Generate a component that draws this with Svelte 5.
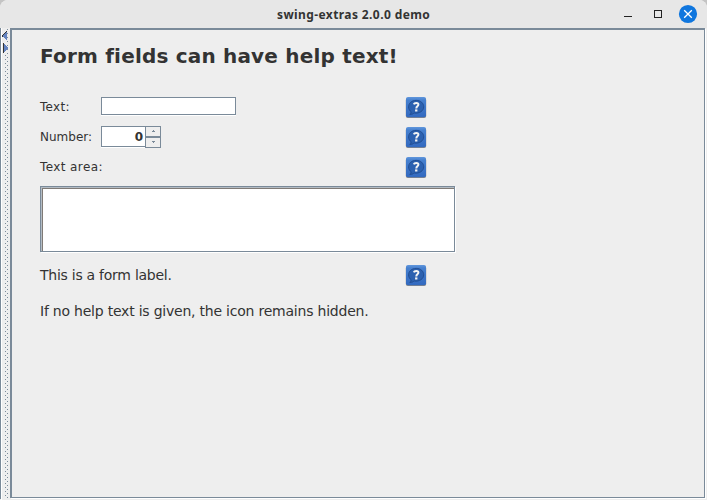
<script>
  const dots = Array.from({ length: 235 }, (_, i) => i);
</script>

{#snippet help()}
  <svg class="help" width="22" height="22" viewBox="0 0 22 22">
    <defs>
      <linearGradient id="tile" x1="0" y1="0" x2="0" y2="1">
        <stop offset="0" stop-color="#6197dc" />
        <stop offset="0.15" stop-color="#4680cf" />
        <stop offset="1" stop-color="#3269bf" />
      </linearGradient>
    </defs>
    <rect x="0.8" y="1" width="20.4" height="20" rx="2" fill="#444" opacity=".6" />
    <rect x="1" y="0" width="20" height="20.2" rx="2" fill="url(#tile)" />
    <path d="M11.2 3.4C6.6 3.4 3.6 6.2 3.6 9.8C3.6 12.2 4.7 13.8 6.2 14.8C6.2 16.1 5.5 17 4.8 17.4C6.9 17.4 8.3 16.8 9.2 16C14.5 16.8 18.7 13.8 18.7 9.8C18.7 6.2 15.7 3.4 11.2 3.4Z" fill="#2c61b0" stroke="#214d92" stroke-width="1" />
    <path d="M8.8 7.4C9.4 5.5 13.4 5.4 13.4 7.6C13.4 9.4 11.3 9.2 11.3 11.4" fill="none" stroke="#f4f4f4" stroke-width="2" />
    <rect x="10.1" y="12.4" width="2.3" height="2.1" fill="#f4f4f4" />
  </svg>
{/snippet}

<div class="window">
  <header>
    <span class="title">swing-extras 2.0.0 demo</span>
    <svg class="controls" width="84" height="28" viewBox="0 0 84 28">
      <path d="M4 16.5h8" stroke="#222" />
      <rect x="34.5" y="10.5" width="7" height="7" fill="none" stroke="#222" />
      <circle cx="68" cy="14" r="9.1" fill="#0f76de" />
      <path d="M64.2 10.2l7.6 7.6M71.8 10.2l-7.6 7.6" stroke="#fff" stroke-width="1.3" />
    </svg>
  </header>
  <div class="body">
    <svg class="divider" width="10" height="472" viewBox="0 0 10 472" shape-rendering="crispEdges">
      <rect width="1" height="471" fill="#7a8a99" />
      <rect x="1" width="1" height="472" fill="#fff" />
      {#each dots as i}
        <rect x={i % 2 ? 5 : 7} y={i * 2 + 1} width="1" height="1" fill="#7a8a99" />
      {/each}
      <rect x="2" y="0" width="5" height="27" fill="#eee" />
      <path d="M7 3v10l-4-5z" fill="#6382bf" />
      <path d="M6 3h1v1h-1v1h-1v1h-1v1h-1v2h-1v-2h1v-1h1v-1h1v-1h1z" fill="#333" />
      <path d="M3 15v10l5-5z" fill="#6382bf" />
      <path d="M3 15h1v10h-1z" fill="#333" />
    </svg>
    <main>
      <h1>Form fields can have help text!</h1>
      <div class="row first">
        <label for="text">Text:</label><input id="text" />{@render help()}
      </div>
      <div class="row">
        <span class="lab">Number:</span>
        <div class="number">0</div>
        <div class="spin">
          <span><svg width="5" height="3" viewBox="0 0 5 3" shape-rendering="crispEdges"><path d="M2 0h1v1h1v1H1V1h1z" fill="#7a8a99" /></svg></span>
          <span><svg width="5" height="3" viewBox="0 0 5 3" shape-rendering="crispEdges"><path d="M1 0h3v1H3v1H2V1H1z" fill="#7a8a99" /></svg></span>
        </div>
        {@render help()}
      </div>
      <div class="row"><span class="wide">Text area:</span>{@render help()}</div>
      <div class="scroll"><textarea aria-label="Text area"></textarea></div>
      <div class="row form"><span>This is a form label.</span>{@render help()}</div>
      <p>If no help text is given, the icon remains hidden.</p>
    </main>
  </div>
</div>

<style>
  :global(body) { margin: 0; background: #c4c4c4; }
  * { box-sizing: border-box; }
  .window { width: 707px; height: 500px; overflow: hidden; background: #eee; color: #333; font-family: "DejaVu Sans", sans-serif; border-radius: 8px 8px 0 0; }
  header { height: 28px; display: flex; justify-content: flex-end; background: #e7e7e7; }
  .title { width: 153px; margin-right: 190px; white-space: nowrap; font: bold 12px/29px "Noto Sans", sans-serif; letter-spacing: .4px; }
  .controls { display: block; margin-right: 3px; }
  .body { display: flex; height: 472px; }
  .divider { display: block; flex: none; background: #eee; }
  main { width: 695px; height: 470px; border: solid #7a8a99; border-width: 2px 1px 1px 2px; padding: 10px 0 0 28px; box-shadow: 1px 1px #fff; }
  h1 { margin: 0; height: 32px; font-size: 20px; line-height: 32px; letter-spacing: .19px; white-space: nowrap; }
  .row { display: flex; align-items: center; height: 30px; width: 388px; font-size: 12px; }
  .row.first { margin-top: 20px; }
  .help { display: block; margin: 2px 1px 0 auto; flex: none; }
  label, .lab { width: 60px; margin-right: 1px; flex: none; }
  label { letter-spacing: .3px; }
  .wide { white-space: nowrap; letter-spacing: .4px; }
  input { width: 135px; height: 18px; padding: 0; border: 1px solid #7a8a99; background: #fff; box-shadow: 0 1px #fff; outline: 0; margin-top: -2px; }
  .number { width: 44px; height: 21px; margin-top: -1px; border: 1px solid #7a8a99; border-right: 0; background: #fff; box-shadow: 0 1px #fff; text-align: right; font-weight: bold; line-height: 20px; padding-right: 2px; }
  .spin { width: 16px; height: 22px; display: flex; flex-direction: column; }
  .spin span { height: 11px; border: 1px solid #7a8a99; display: flex; align-items: center; justify-content: center; }
  .scroll { width: 415px; height: 66px; margin-top: 4px; border: 1px solid #7a8a99; box-shadow: 1px 1px #fff; }
  textarea { display: block; width: 413px; height: 64px; padding: 0; resize: none; border: 0; border-radius: 0; background: #fff; outline: 0; box-shadow: inset 1px 1px #b4bcc4, inset 2px 2px #807b76; }
  .form { margin-top: 8px; font-size: 14px; letter-spacing: -.26px; }
  p { margin: 10px 0 0; font-size: 14px; line-height: 22px; letter-spacing: -.22px; white-space: nowrap; }
</style>
